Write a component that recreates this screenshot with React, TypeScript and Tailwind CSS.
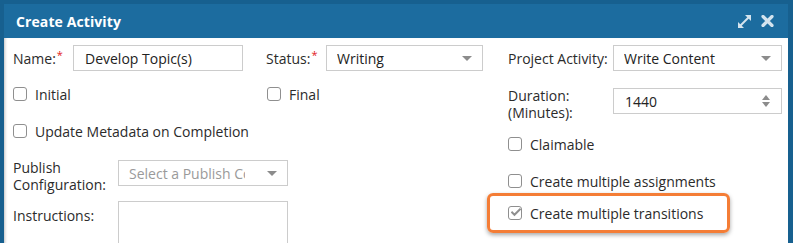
import React from "react";

const font = { fontFamily: '"Open Sans", "Noto Sans", sans-serif' };

function Req() {
  return <span className="text-[#e21b1b] text-[11px] leading-none relative -top-[5px] ml-[1px]">*</span>;
}

function Caret() {
  return (
    <span className="w-0 h-0 shrink-0 border-l-[5px] border-r-[5px] border-t-[5px] border-l-transparent border-r-transparent border-t-[#8c8c8c]" />
  );
}

function Box({ checked = false }: { checked?: boolean }) {
  return (
    <span className="w-[14px] h-[14px] shrink-0 rounded-[3px] border border-[#8f8f8f] bg-white flex items-center justify-center">
      {checked && (
        <svg width="13" height="11" viewBox="0 0 13 11" className="-mt-[2px] ml-[2px]">
          <path d="M1.5 5.5 L4.5 8.5 L11.5 1.5" fill="none" stroke="#8f8f8f" strokeWidth="2.6" strokeLinecap="square" />
        </svg>
      )}
    </span>
  );
}

function Check({ label, checked }: { label: string; checked?: boolean }) {
  return (
    <div className="flex items-center gap-[8px] h-[20px] text-[14px] text-[#2b2b2b]">
      <Box checked={checked} />
      <span>{label}</span>
    </div>
  );
}

function Select({ value, w, muted }: { value: string; w: string; muted?: boolean }) {
  return (
    <div className={`${w} h-[26px] border border-[#cccccc] bg-white flex items-center pl-[10px] pr-[10px] text-[14px]`}>
      <div className="flex-1 min-w-0">
        <div className={`overflow-hidden whitespace-nowrap ${muted ? "text-[#9a9a9a] w-[116px]" : "text-[#222]"}`}>{value}</div>
      </div>
      <Caret />
    </div>
  );
}

export default function App() {
  return (
    <div style={font} className="w-[793px] h-[243px] overflow-hidden bg-[#17608f] pt-[4px] pl-[4px] pr-[5px]">
      {/* title bar */}
      <div className="h-[34px] bg-[#1c6c9f] flex items-center pl-[12px] pr-[14px]">
        <span className="text-white font-bold text-[14px] flex-1 tracking-[0.1px]">Create Activity</span>
        <svg width="15" height="15" viewBox="0 0 15 15" className="mr-[9px]">
          <path d="M3 12 L12 3" stroke="#d3e3ee" strokeWidth="2" />
          <path d="M8 1 L14 1 L14 7 Z" fill="#d3e3ee" />
          <path d="M1 8 L1 14 L7 14 Z" fill="#d3e3ee" />
        </svg>
        <svg width="13" height="12" viewBox="0 0 13 12">
          <path d="M2 1.5 L11 10.5 M11 1.5 L2 10.5" stroke="#d3e3ee" strokeWidth="3.2" strokeLinecap="round" />
        </svg>
      </div>

      {/* body */}
      <div className="h-[210px] bg-white pl-[9px] pt-[7px] flex shadow-[inset_3px_0_3px_-2px_rgba(0,0,0,0.25)]">
        {/* left area */}
        <div className="w-[470px] flex flex-col">
          <div className="flex items-center h-[26px] text-[14px] text-[#2b2b2b]">
            <span className="w-[60px]">Name:<Req /></span>
            <div className="w-[170px] h-[26px] border border-[#cccccc] flex items-center pl-[11px] text-[#222]">Develop Topic(s)</div>
            <span className="w-[60px] ml-[23px]">Status:<Req /></span>
            <Select value="Writing" w="w-[157px]" />
          </div>
          <div className="flex mt-[13px]">
            <div className="w-[254px]"><Check label="Initial" /></div>
            <Check label="Final" />
          </div>
          <div className="mt-[17px]"><Check label="Update Metadata on Completion" /></div>
          <div className="flex items-start mt-[19px] text-[14px] text-[#2b2b2b]">
            <div className="w-[105px] leading-[17px] -mt-[1px] flex flex-col">
              <span>Publish</span>
              <span>Configuration:</span>
            </div>
            <Select value="Select a Publish Configuration" w="w-[170px]" muted />
          </div>
          <div className="flex items-start mt-[8px] text-[14px] text-[#2b2b2b]">
            <span className="w-[105px] leading-[17px] mt-[6px]">Instructions:</span>
            <div className="w-[170px] h-[60px] border border-[#cccccc]" />
          </div>
        </div>

        {/* right column */}
        <div className="ml-[25px] flex flex-col text-[14px] text-[#2b2b2b]">
          <div className="flex items-center h-[26px]">
            <span className="w-[105px]">Project Activity:</span>
            <Select value="Write Content" w="w-[169px]" />
          </div>
          <div className="flex items-start h-[26px] mt-[17px]">
            <div className="w-[105px] leading-[17px] -mt-[1px] flex flex-col">
              <span>Duration:</span>
              <span>(Minutes):</span>
            </div>
            <div className="w-[169px] h-[26px] border border-[#cccccc] flex items-center pl-[11px] pr-[11px] text-[#222]">
              <span className="flex-1">1440</span>
              <span className="flex flex-col gap-[2px]">
                <span className="w-0 h-0 border-l-[4px] border-r-[4px] border-b-[5px] border-l-transparent border-r-transparent border-b-[#8c8c8c]" />
                <span className="w-0 h-0 border-l-[4px] border-r-[4px] border-t-[5px] border-l-transparent border-r-transparent border-t-[#8c8c8c]" />
              </span>
            </div>
          </div>
          <div className="mt-[20px]"><Check label="Claimable" /></div>
          <div className="mt-[17px]"><Check label="Create multiple assignments" /></div>
          <div className="mt-[2px] -ml-[21px] w-[243px] h-[40px] border-[3px] border-[#f47d36] rounded-[6px] shadow-[0_2px_4px_rgba(0,0,0,0.35)] flex items-center pl-[18px]">
            <Check label="Create multiple transitions" checked />
          </div>
        </div>
      </div>
    </div>
  );
}
